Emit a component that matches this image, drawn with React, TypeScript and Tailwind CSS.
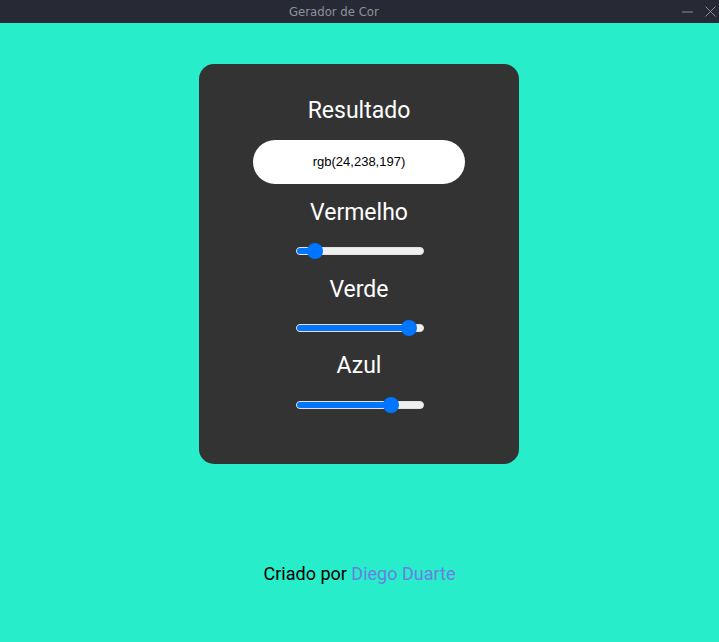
import React, { useState } from "react";

type SliderProps = {
  value: number;
  onChange: (v: number) => void;
};

const Slider: React.FC<SliderProps> = ({ value, onChange }) => {
  const pct = value / 255;
  const handleClick = (e: React.MouseEvent<HTMLDivElement>) => {
    const rect = e.currentTarget.getBoundingClientRect();
    const x = Math.min(Math.max(e.clientX - rect.left - 8, 0), rect.width - 16);
    onChange(Math.round((x / (rect.width - 16)) * 255));
  };
  return (
    <div
      className="relative h-4 w-[128px] ml-[2px] cursor-pointer flex items-center"
      onClick={handleClick}
    >
      <div className="h-[8px] w-full rounded-full bg-[#efefef] border border-[#e2e2e2] overflow-hidden">
        <div
          className="h-full bg-[#0075ff]"
          style={{ width: `${8 + pct * 112}px` }}
        />
      </div>
      <div
        className="absolute top-0 h-4 w-4 rounded-full bg-[#0075ff]"
        style={{ left: `${pct * 112}px` }}
      />
    </div>
  );
};

const App: React.FC = () => {
  const [r, setR] = useState(24);
  const [g, setG] = useState(238);
  const [b, setB] = useState(197);

  const color = `rgb(${r},${g},${b})`;

  return (
    <div className="flex flex-col h-[642px] w-full font-['Roboto',sans-serif]">
      <div className="h-[23px] shrink-0 bg-[#272a35] relative flex items-center pl-[289px]">
        <span className="text-[13px] text-[#8e919a] font-['DejaVu_Sans_Condensed','DejaVu_Sans',sans-serif]">
          Gerador de Cor
        </span>
        <div className="absolute right-0 top-0 h-full flex items-center gap-[12px] pr-[3px] text-[#8a8d96]">
          <svg width="11" height="11" viewBox="0 0 11 11">
            <line x1="0" y1="6" x2="11" y2="6" stroke="currentColor" strokeWidth="1" />
          </svg>
          <svg width="11" height="11" viewBox="0 0 11 11">
            <line x1="0.5" y1="0.5" x2="10.5" y2="10.5" stroke="currentColor" strokeWidth="1" />
            <line x1="10.5" y1="0.5" x2="0.5" y2="10.5" stroke="currentColor" strokeWidth="1" />
          </svg>
        </div>
      </div>
      <div className="flex-1 flex flex-col items-center bg-[#27edca]">
        <div className="mt-[41px] ml-[-1px] w-[320px] h-[400px] rounded-[15px] bg-[#333333] flex flex-col items-center pt-[33px]">
          <h1 className="text-[23px] leading-[28px] text-white">Resultado</h1>
          <div className="mt-[15px] w-[212px] h-[44px] rounded-full bg-white flex items-center justify-center text-[13px] text-black font-['Liberation_Sans',Arial,sans-serif]">
            {color}
          </div>
          <h2 className="mt-[15px] text-[23px] leading-[28px] text-white">Vermelho</h2>
          <div className="mt-[16px]">
            <Slider value={r} onChange={setR} />
          </div>
          <h2 className="mt-[17px] text-[23px] leading-[28px] text-white">Verde</h2>
          <div className="mt-[16px]">
            <Slider value={g} onChange={setG} />
          </div>
          <h2 className="mt-[16px] text-[23px] leading-[28px] text-white">Azul</h2>
          <div className="mt-[17px]">
            <Slider value={b} onChange={setB} />
          </div>
        </div>
        <p className="mt-[99px] text-[18px] leading-[22px] text-black">
          Criado por <a className="text-[#6b7fe0]">Diego Duarte</a>
        </p>
      </div>
    </div>
  );
};

export default App;
